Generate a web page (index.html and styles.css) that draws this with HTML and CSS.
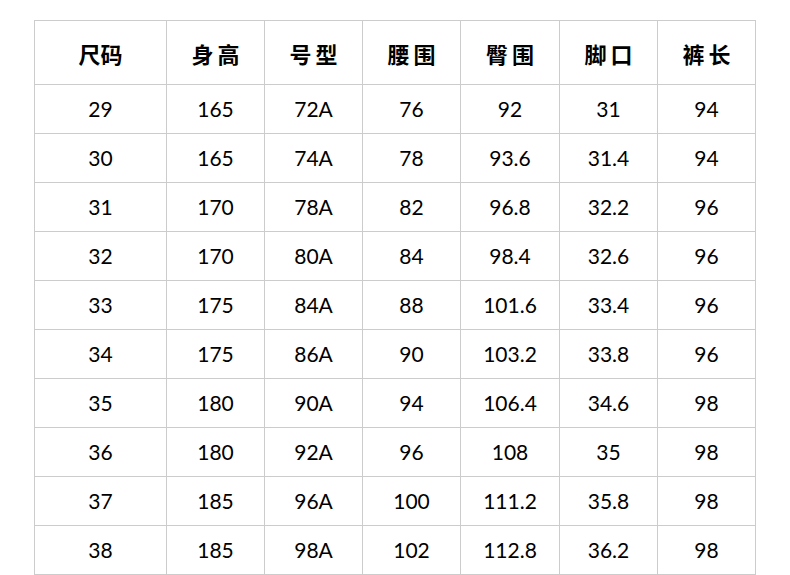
FILE: index.html
```html
<!DOCTYPE html>
<html>
<head>
<meta charset="utf-8">
<link rel="stylesheet" href="styles.css">
</head>
<body>
<table class="size-table">
  <colgroup>
    <col class="c-first">
    <col class="c-std">
    <col class="c-std">
    <col class="c-std">
    <col class="c-wide">
    <col class="c-std">
    <col class="c-std">
  </colgroup>
  <thead>
    <tr>
      <th>尺码</th>
      <th><span class="sp">身高</span></th>
      <th><span class="sp">号型</span></th>
      <th><span class="sp">腰围</span></th>
      <th><span class="sp">臀围</span></th>
      <th><span class="sp">脚口</span></th>
      <th><span class="sp">裤长</span></th>
    </tr>
  </thead>
  <tbody>
    <tr><td>29</td><td>165</td><td>72A</td><td>76</td><td>92</td><td>31</td><td>94</td></tr>
    <tr><td>30</td><td>165</td><td>74A</td><td>78</td><td>93.6</td><td>31.4</td><td>94</td></tr>
    <tr><td>31</td><td>170</td><td>78A</td><td>82</td><td>96.8</td><td>32.2</td><td>96</td></tr>
    <tr><td>32</td><td>170</td><td>80A</td><td>84</td><td>98.4</td><td>32.6</td><td>96</td></tr>
    <tr><td>33</td><td>175</td><td>84A</td><td>88</td><td>101.6</td><td>33.4</td><td>96</td></tr>
    <tr><td>34</td><td>175</td><td>86A</td><td>90</td><td>103.2</td><td>33.8</td><td>96</td></tr>
    <tr><td>35</td><td>180</td><td>90A</td><td>94</td><td>106.4</td><td>34.6</td><td>98</td></tr>
    <tr><td>36</td><td>180</td><td>92A</td><td>96</td><td>108</td><td>35</td><td>98</td></tr>
    <tr><td>37</td><td>185</td><td>96A</td><td>100</td><td>111.2</td><td>35.8</td><td>98</td></tr>
    <tr><td>38</td><td>185</td><td>98A</td><td>102</td><td>112.8</td><td>36.2</td><td>98</td></tr>
  </tbody>
</table>
</body>
</html>
```
FILE: styles.css
```css
html, body {
  margin: 0;
  padding: 0;
  background: #ffffff;
}
body {
  padding: 20px 0 0 34px;
}
.size-table {
  border-collapse: collapse;
  table-layout: fixed;
  width: 722px;
  color: #000000;
  font-family: "Lato", "Liberation Sans", "Noto Sans CJK SC", sans-serif;
}
.c-first { width: 132px; }
.c-std { width: 98px; }
.c-wide { width: 99px; }
.size-table th,
.size-table td {
  border: 1px solid #cccccc;
  padding: 0;
  text-align: center;
  vertical-align: middle;
}
.size-table th {
  height: 62px;
  font-family: "Noto Sans CJK SC", sans-serif;
  font-size: 22px;
  font-weight: 700;
  padding-top: 1px;
}
.size-table td {
  height: 46px;
  padding-bottom: 2px;
  font-size: 21px;
  font-weight: 400;
}
.sp {
  letter-spacing: 4px;
  margin-right: -4px;
}
```
